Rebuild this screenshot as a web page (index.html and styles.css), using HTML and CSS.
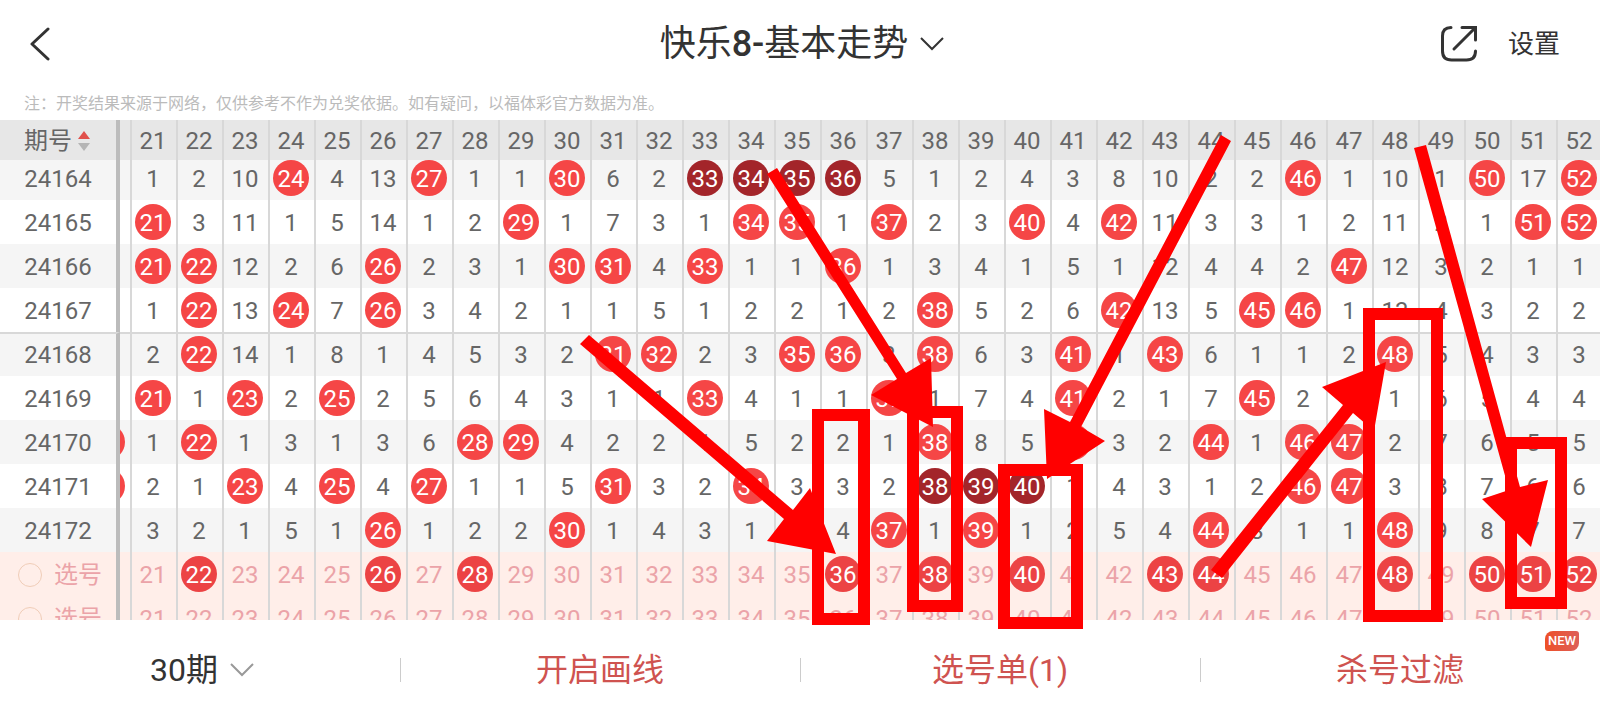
FILE: index.html
```html
<!DOCTYPE html>
<html lang="zh-CN">
<head>
	<meta charset="UTF-8">
	<meta name="viewport" content="width=device-width, initial-scale=1">
	<title>快乐8-基本走势</title>
	<link rel="stylesheet" href="styles.css">
</head>
<body>
	<header class="nav">
		<div class="nav-side">
			<button type="button" class="btn" aria-label="返回">
				<svg class="icon-back" viewBox="0 0 20 34"><path d="M18 2L2 17l16 15"/></svg>
			</button>
		</div>
		<button type="button" class="btn title">
			<span>快乐<b>8-</b>基本走势</span>
			<svg class="icon-down" viewBox="0 0 24 14"><path d="M1 1l11 11L23 1"/></svg>
		</button>
		<div class="nav-side nav-right">
			<button type="button" class="btn" aria-label="分享">
				<svg class="icon-share" viewBox="0 0 38 38">
					<path d="M11 2.500C5 2.500 2.500 6 2.500 11v15c0 6 3.500 9 9 9h15c6 0 9-3 9-9"/>
					<path d="M22 2.500h13.500V15M35 3L14 24"/>
				</svg>
			</button>
			<button type="button" class="btn setting">设置</button>
		</div>
	</header>
	<p class="note">注：开奖结果来源于网络，仅供参考不作为兑奖依据。如有疑问，以福体彩官方数据为准。</p>

	<main id="scroll" class="scroll">
		<table class="trend">
			<thead id="head"></thead>
			<tbody id="list"></tbody>
		</table>
	</main>

	<footer class="bar">
		<button type="button" class="btn bar-item period">
			<span>30期</span>
			<svg class="icon-down" viewBox="0 0 24 14"><path d="M1 1l11 11L23 1"/></svg>
		</button>
		<button type="button" class="btn bar-item">开启画线</button>
		<button type="button" class="btn bar-item">选号单(1)</button>
		<button type="button" class="btn bar-item">杀号过滤<i class="new">NEW</i></button>
	</footer>

	<!-- 画线标注 -->
	<svg class="marks" width="1600" height="720" viewBox="0 0 1600 720">
		<g class="mark-box">
			<rect x="818" y="415" width="46" height="204"/>
			<rect x="913" y="412" width="44" height="194"/>
			<rect x="1004" y="470" width="73" height="153"/>
			<rect x="1369" y="314" width="68" height="302"/>
			<rect x="1511" y="443" width="50" height="160"/>
		</g>
		<g class="mark-arrow">
			<polygon points="589,335 793,510 810,488 836,554 767,541 784,519 580,344"/>
			<polygon points="777,168 906,373 931,358 933,427 871,395 897,379 767,174"/>
			<polygon points="1221,135 1070,422 1044,409 1047,479 1105,441 1081,427 1231,141"/>
			<polygon points="1211,570 1343,405 1322,387 1386,362 1374,431 1353,413 1222,578"/>
			<polygon points="1414,148 1509,490 1482,499 1531,547 1548,480 1520,487 1426,145"/>
		</g>
	</svg>

	<script src="script.js"></script>
</body>
</html>
```

FILE: styles.css
```css
* {
	box-sizing: border-box;
}
body {
	position: relative;
	display: flex;
	flex-direction: column;
	height: 100vh;
	margin: 0;
	overflow: hidden;
	background: #fff;
	color: #333;
	font-family: Roboto, "Noto Sans CJK SC", sans-serif;
}
svg {
	display: block;
	fill: none;
	stroke: #333;
}
.btn {
	padding: 0;
	border: 0;
	background: none;
	color: inherit;
	font: inherit;
	cursor: pointer;
}

/* 顶部 */
.nav {
	display: flex;
	align-items: center;
	height: 88px;
	padding: 0 40px 0 30px;
}
.nav-side {
	display: flex;
	flex: 1;
	align-items: center;
}
.nav-right {
	justify-content: flex-end;
	gap: 30px;
}
.title {
	display: flex;
	align-items: center;
	gap: 12px;
	margin-left: 14px;
	font-size: 36px;
	line-height: 48px;
}
.title b {
	font-weight: 500;
}
.setting {
	font-size: 26px;
	line-height: 36px;
}
.icon-back {
	width: 20px;
	height: 34px;
	stroke-width: 3;
	stroke-linecap: round;
	stroke-linejoin: round;
}
.icon-down {
	width: 24px;
	height: 14px;
	stroke-width: 2;
}
.icon-share {
	width: 38px;
	height: 38px;
	stroke-width: 3;
	stroke-linecap: round;
}
.note {
	height: 32px;
	margin: 0;
	padding-left: 24px;
	color: #bbb;
	font-size: 16px;
	line-height: 32px;
}

/* 走势表 */
.scroll {
	flex: 1;
	min-height: 0;
	overflow: auto;
	scrollbar-width: none;
}
.trend {
	border-spacing: 0;
	color: #666;
	font-size: 24px;
	line-height: 36px;
}
.trend th,
.trend td {
	width: 46px;
	min-width: 46px;
	height: 44px;
	padding: 0 2px 0 0;
	border-right: 2px solid #d8d8d8;
	background: #fff;
	font-weight: 400;
	text-align: center;
}
.trend .name {
	position: sticky;
	left: 0;
	z-index: 1;
	width: 120px;
	min-width: 120px;
	padding: 2px 0 0 0;
	border-right: 4px solid #bcbcbc;
}
.trend thead th {
	position: sticky;
	top: 0;
	z-index: 2;
	height: 40px;
	padding-top: 2px;
	background: #e7e7e7;
}
.trend thead .name {
	z-index: 3;
}
.trend .odd > * {
	background: #f5f5f5;
}
.trend .split > * {
	padding-bottom: 2px;
	border-top: 2px solid #d8d8d8;
}
.trend .pick > * {
	background: #ffeee9;
	color: #eba3a8;
}
.sort {
	display: flex;
	align-items: center;
	gap: 6px;
	padding-left: 24px;
}
.icon-sort {
	width: 12px;
	height: 20px;
	stroke: none;
}
.icon-sort .up {
	fill: #e0504b;
}
.icon-sort .down {
	fill: #b5b5b5;
}
.ball,
.num {
	display: block;
	width: 36px;
	height: 36px;
	margin: 0 auto;
	border-radius: 50%;
	line-height: 38px;
}
.ball {
	background: #f54646;
	color: #fff;
}
.ball.deep {
	background: #a3252a;
}
.pick .ball {
	background: #ec4344;
}
.pick-name {
	display: flex;
	align-items: center;
	gap: 12px;
	padding-left: 18px;
}
.pick-name input {
	appearance: none;
	width: 24px;
	height: 24px;
	margin: 0;
	border: 1px solid #f0cdb8;
	border-radius: 50%;
}

/* 底部 */
.bar {
	display: flex;
	height: 100px;
	color: #cf5350;
	font-size: 32px;
	line-height: 44px;
}
.bar-item {
	position: relative;
	display: flex;
	flex: 0 0 25%;
	align-items: center;
	justify-content: center;
	gap: 12px;
}
.bar-item + .bar-item::before {
	content: "";
	position: absolute;
	left: 0;
	width: 1px;
	height: 24px;
	background: #ccc;
}
.bar .period {
	padding-left: 4px;
	color: #333;
}
.period .icon-down {
	stroke: #999;
}
.new {
	position: absolute;
	top: 11px;
	right: 21px;
	width: 34px;
	height: 20px;
	border-radius: 8px 3px 8px 3px;
	background: linear-gradient(to right, #ee5028, #dd5f58);
	color: #fff;
	font-size: 13px;
	font-style: normal;
	font-weight: 500;
	line-height: 20px;
	text-align: center;
}

/* 标注 */
.marks {
	position: absolute;
	top: 0;
	left: 0;
	z-index: 5;
	pointer-events: none;
}
.mark-box {
	stroke: #f00;
	stroke-width: 12;
}
.mark-arrow {
	fill: #f00;
	stroke: none;
}
```

FILE: script.js
```js
var scroll = document.getElementById('scroll');
var head = document.getElementById('head');
var list = document.getElementById('list');
var first = 20;
var last = 52;

// o 为开出号码，x 为连号，- 为空，数字为遗漏值
var data = {
	24164: '- 1 2 10 o 4 13 o 1 1 o 6 2 x x x x 5 1 2 4 3 8 10 2 2 o 1 10 1 o 17 o',
	24165: '- o 3 11 1 5 14 1 2 o 1 7 3 1 o o 1 o 2 3 o 4 o 11 3 3 1 2 11 2 1 o o',
	24166: '- o o 12 2 6 o 2 3 1 o o 4 o 1 1 o 1 3 4 1 5 1 12 4 4 2 o 12 3 2 1 1',
	24167: '- 1 o 13 o 7 o 3 4 2 1 1 5 1 2 2 1 2 o 5 2 6 o 13 5 o o 1 13 4 3 2 2',
	24168: '- 2 o 14 1 8 1 4 5 3 2 o o 2 3 o o 3 o 6 3 o 1 o 6 1 1 2 o 5 4 3 3',
	24169: '- o 1 o 2 o 2 5 6 4 3 1 1 o 4 1 1 o 1 7 4 o 2 1 7 o 2 3 1 6 5 4 4',
	24170: 'o 1 o 1 3 1 3 6 o o 4 2 2 1 5 2 2 1 o 8 5 o 3 2 o 1 o o 2 7 6 5 5',
	24171: 'o 2 1 o 4 o 4 o 1 1 5 o 3 2 o 3 3 2 x x x 1 4 3 1 2 o o 3 8 7 6 6',
	24172: '- 3 2 1 5 1 o 1 2 2 o 1 4 3 1 4 4 o 1 o 1 2 5 4 o 3 1 1 o 9 8 7 7'
};

// 两行选号
var picks = [
	[22, 26, 28, 36, 38, 40, 43, 44, 48, 50, 51, 52],
	[]
];

// 表头
var html = '<tr><th class="name"><div class="sort">期号' +
	'<svg class="icon-sort" viewBox="0 0 12 20"><path class="up" d="M6 0l6 8H0z"/><path class="down" d="M0 12h12l-6 8z"/></svg>' +
	'</div></th>';
for (var i = first; i <= last; i++) {
	html += '<th>' + i + '</th>';
}
head.innerHTML = html + '</tr>';

// 开奖行
html = '';
Object.keys(data).forEach(function(no, index) {
	var cls = index % 2 ? '' : 'odd';
	if (no === '24168') cls += ' split';
	html += '<tr class="' + cls + '"><th class="name">' + no + '</th>';
	data[no].split(' ').forEach(function(v, i) {
		if (v === 'o') {
			v = '<span class="ball">' + (first + i) + '</span>';
		} else if (v === 'x') {
			v = '<span class="ball deep">' + (first + i) + '</span>';
		} else if (v === '-') {
			v = '';
		} else {
			v = '<span class="num">' + v + '</span>';
		}
		html += '<td>' + v + '</td>';
	});
	html += '</tr>';
});

// 选号行
picks.forEach(function(nums) {
	html += '<tr class="pick"><th class="name"><label class="pick-name"><input type="radio" name="pick">选号</label></th>';
	for (var i = first; i <= last; i++) {
		var cls = nums.indexOf(i) > -1 ? 'ball' : 'num';
		html += '<td><button type="button" class="btn ' + cls + '">' + i + '</button></td>';
	}
	html += '</tr>';
});
list.innerHTML = html;

// 点击选号
list.addEventListener('click', function(e) {
	if (e.target.tagName === 'BUTTON') {
		e.target.classList.toggle('ball');
		e.target.classList.toggle('num');
	}
});

scroll.scrollLeft = 34;
scroll.scrollTop = 4;
```
